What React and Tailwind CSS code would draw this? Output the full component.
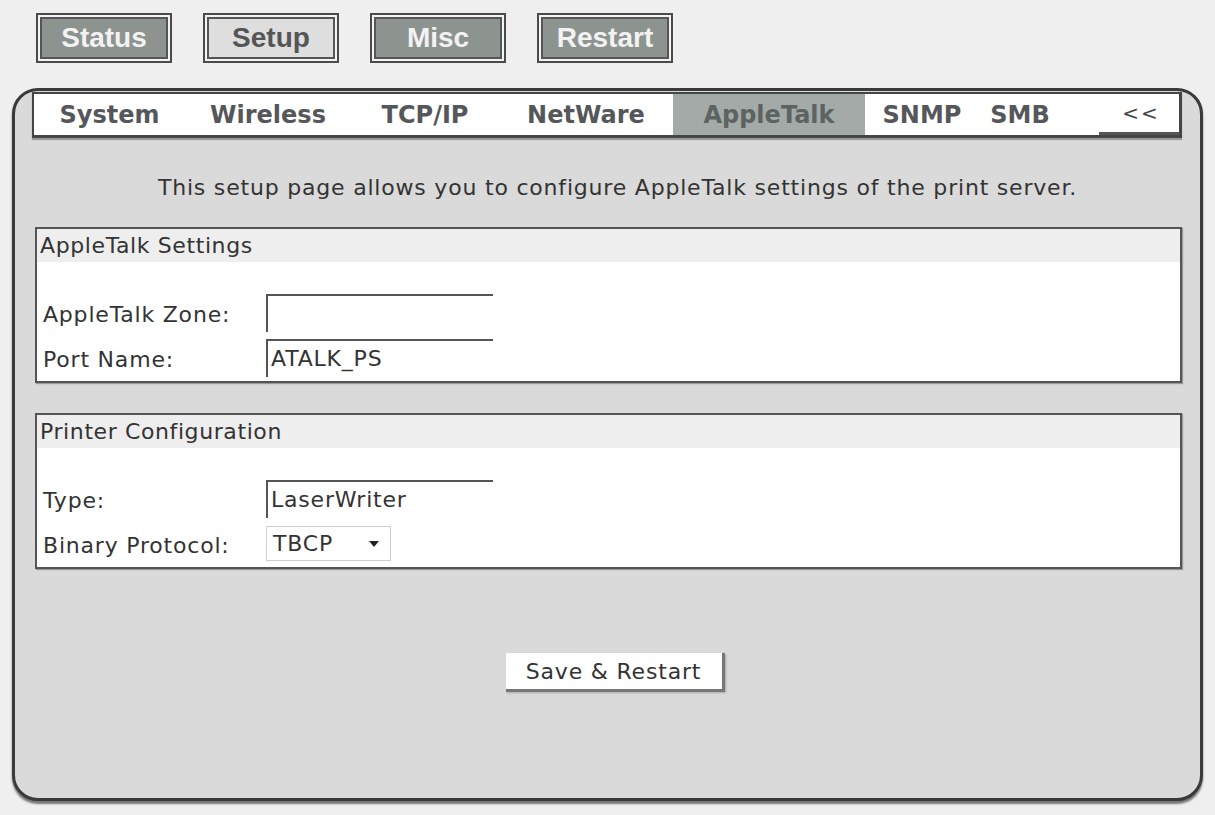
import React from 'react';

const topNav = [
    { id: 'status', label: 'Status' },
    { id: 'setup', label: 'Setup', active: true },
    { id: 'misc', label: 'Misc' },
    { id: 'restart', label: 'Restart' },
];

const tabs = [
    { id: 'system', label: 'System', w: 'w-[151px]' },
    { id: 'wireless', label: 'Wireless', w: 'w-[166px]' },
    { id: 'tcpip', label: 'TCP/IP', w: 'w-[148px]' },
    { id: 'netware', label: 'NetWare', w: 'w-[174px]' },
    { id: 'appletalk', label: 'AppleTalk', w: 'w-[192px]', active: true },
    { id: 'snmp', label: 'SNMP', w: 'w-[114px]' },
    { id: 'smb', label: 'SMB', w: 'w-[82px]' },
];

function NavButton({ label, active }) {
    return (
        <div className="border-2 border-[#4a4a4a] p-[2px] bg-[#f4f4f4]">
            <div
                className={`w-[128px] h-[42px] border-2 border-[#555] flex items-center justify-center text-[28px] font-bold ${active ? 'bg-[#dedede] text-[#555]' : 'bg-[#8d9490] text-[#f2f2f2]'
                    }`}
                style={{ fontFamily: '"Liberation Sans", Arial, sans-serif' }}
            >
                {label}
            </div>
        </div>
    );
}

function TextInput({ value }) {
    return (
        <div className="w-[227px] h-[38px] bg-white border-t-2 border-l-2 border-[#555] flex items-center pl-[3px] text-[22px] tracking-[0.8px] text-[#333]">
            {value}
        </div>
    );
}

function Row({ label, children }) {
    return (
        <div className="flex items-center h-[45px]">
            <div className="w-[229px] pl-[6px] pt-[4px] text-[22px] tracking-[0.8px] text-[#333]">{label}</div>
            {children}
        </div>
    );
}

function Section({ title, children }) {
    return (
        <div className="ml-[20px] w-[1147px] border-2 border-[#555] bg-white shadow-[1px_1px_1px_#999]">
            <div className="h-[33px] bg-[#eeeeee] flex items-center pl-[3px] text-[22px] tracking-[0.6px] text-[#333]">
                {title}
            </div>
            <div className="pt-[28px] pb-[1px]">{children}</div>
        </div>
    );
}

export default function App() {
    return (
        <div
            className="min-h-screen w-[1215px] h-[815px] bg-[#efefef] overflow-hidden"
            style={{ fontFamily: '"DejaVu Sans", Verdana, sans-serif' }}
        >
            {/* Top nav */}
            <div className="flex gap-[31px] pl-[36px] pt-[13px]">
                {topNav.map((b) => (
                    <NavButton key={b.id} label={b.label} active={b.active} />
                ))}
            </div>

            {/* Panel */}
            <div className="ml-[12px] mt-[25px] w-[1191px] h-[713px] rounded-[26px] border-[3px] border-[#3a3a3a] bg-[#dadada] shadow-[0_3px_2px_#777]">
                {/* Tab strip */}
                <div className="ml-[17px] mt-[1px] w-[1150px] h-[46px] bg-white border-l-2 border-t-2 border-b-[3px] border-r-[3px] border-[#454545] shadow-[0_2px_1px_#999] flex">
                    {tabs.map((t) => (
                        <div
                            key={t.id}
                            className={`${t.w} h-full flex items-center justify-center text-[24px] font-bold ${t.active ? 'bg-[#a3aaa8] text-[#5c6361]' : 'text-[#55575a]'
                                }`}
                        >
                            {t.label}
                        </div>
                    ))}
                    <div className="flex-1 flex justify-end">
                        <div className="w-[80px] h-full border-b-[3px] border-[#555] flex items-center justify-center pl-[4px] text-[20px] tracking-[2px] text-[#444]">
                            &lt;&lt;
                        </div>
                    </div>
                </div>

                {/* Description */}
                <p className="mt-[33px] mb-[23px] text-center text-[22px] tracking-[0.8px] text-[#333] pl-[20px]">
                    This setup page allows you to configure AppleTalk settings of the print server.
                </p>

                <Section title="AppleTalk Settings">
                    <Row label="AppleTalk Zone:">
                        <TextInput value="" />
                    </Row>
                    <Row label="Port Name:">
                        <TextInput value="ATALK_PS" />
                    </Row>
                </Section>

                <div className="h-[30px]" />

                <Section title="Printer Configuration">
                    <Row label="Type:">
                        <TextInput value="LaserWriter" />
                    </Row>
                    <Row label="Binary Protocol:">
                        <div className="w-[125px] h-[35px] bg-white border border-[#cfcfcf] flex items-center justify-between pl-[6px] pr-[10px] text-[22px] tracking-[0.8px] text-[#333]">
                            <span>TBCP</span>
                            <svg width="12" height="8" viewBox="0 0 12 8">
                                <path d="M1 1h10L6 7z" fill="#222" />
                            </svg>
                        </div>
                    </Row>
                </Section>

                {/* Save button */}
                <div className="flex justify-center mt-[84px] pl-[15px]">
                    <button className="w-[219px] h-[39px] bg-white border-r-[3px] border-b-[3px] border-[#777] shadow-[1px_1px_2px_#aaa] text-[22px] tracking-[0.8px] text-[#333]">
                        Save &amp; Restart
                    </button>
                </div>
            </div>
        </div>
    );
}
